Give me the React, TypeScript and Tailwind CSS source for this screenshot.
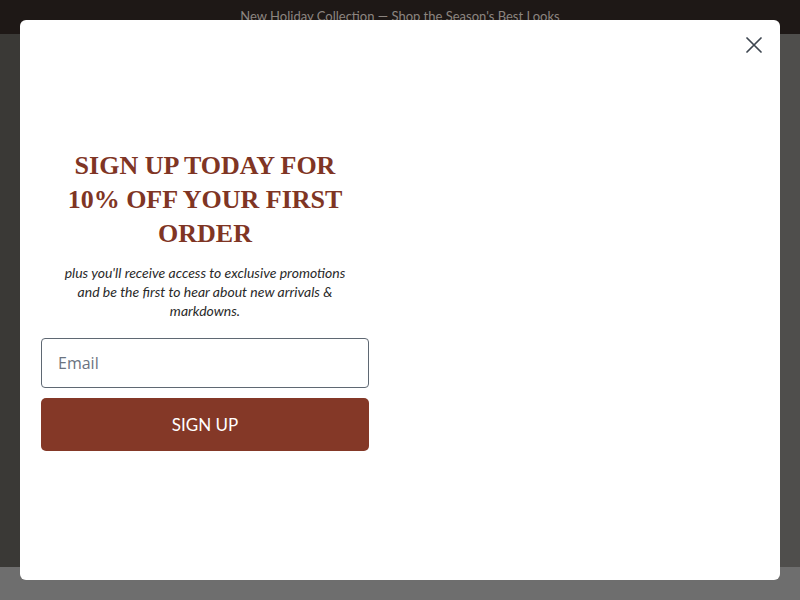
export default function App() {
    return (
        <div className="relative h-[600px] w-[800px] overflow-hidden bg-[#6e6e6e] font-['Lato',sans-serif]">
            {/* Page behind the popup */}
            <div className="flex h-[34px] items-center justify-center bg-[#1e1816] text-[13px] text-[#8c8580]">
                New Holiday Collection — Shop the Season's Best Looks
            </div>
            <div className="flex h-[533px]">
                <div className="w-[20px] bg-[#3a3936]" />
                <div className="flex-1 bg-[#4f4e4c]" />
            </div>

            {/* Popup */}
            <div className="absolute left-[20px] top-[20px] flex h-[560px] w-[760px] items-center rounded-[6px] bg-white px-[21px]">
                <button className="absolute right-[18px] top-[17px] flex h-[16px] w-[16px] items-center justify-center text-[#3e4650]">
                    <svg width="16" height="16" viewBox="0 0 16 16" fill="none" stroke="currentColor" strokeWidth="1.7" strokeLinecap="round">
                        <path d="M1 1 L15 15 M15 1 L1 15" />
                    </svg>
                </button>

                <div className="flex w-[328px] flex-col">
                    <h2 className="px-[22px] text-center font-['Liberation_Serif',serif] text-[26px] font-bold leading-[34px] text-[#7f3524]">
                        SIGN UP TODAY FOR 10% OFF YOUR FIRST ORDER
                    </h2>
                    <p className="mt-[12px] px-[20px] text-center text-[14px] italic leading-[19px] text-[#2a2a2a]">
                        plus you'll receive access to exclusive promotions and be the first to hear about new arrivals &amp; markdowns.
                    </p>
                    <input
                        type="email"
                        placeholder="Email"
                        className="mt-[18px] h-[50px] w-full rounded-[4px] border border-[#5f6873] px-[16px] font-['Open_Sans',sans-serif] text-[16px] text-[#333] outline-none placeholder:text-[#6b7380]"
                    />
                    <button className="mt-[10px] h-[53px] w-full rounded-[5px] bg-[#843827] text-[17px] text-white">
                        SIGN UP
                    </button>
                </div>
            </div>
        </div>
    );
}
